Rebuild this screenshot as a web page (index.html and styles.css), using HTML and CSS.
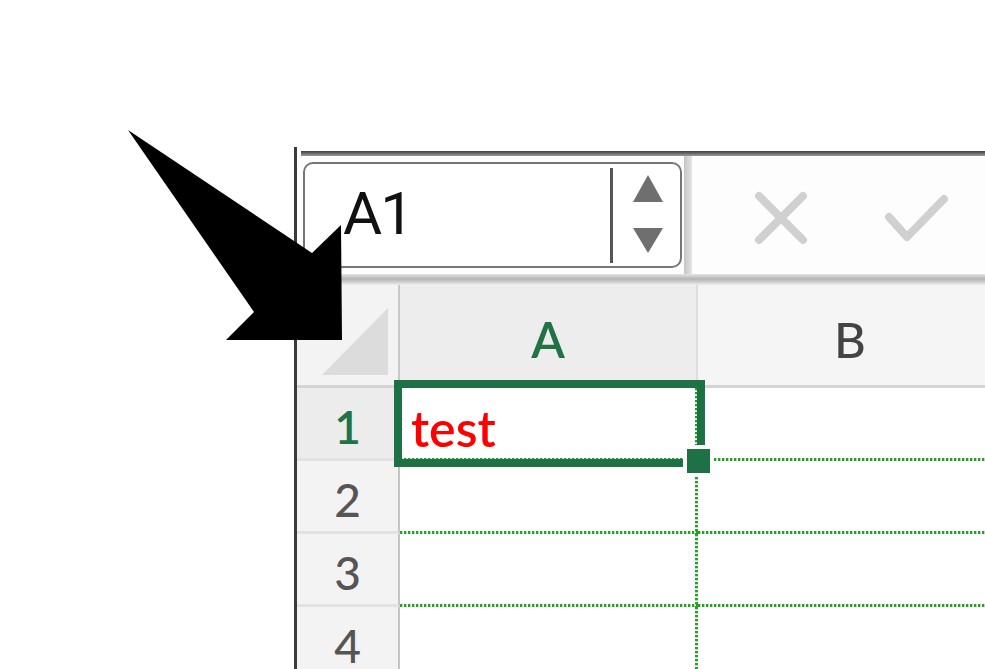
FILE: index.html
```html
<!DOCTYPE html>
<html>
<head>
<meta charset="utf-8">
<title>Excel name box</title>
<link rel="stylesheet" href="styles.css">
</head>
<body>
<div class="stage">
  <div class="window">
    <div class="fbar">
      <div class="topline"></div>
      <div class="fbar-body">
        <div class="namebox">
          <div class="nb-text">A1</div>
          <div class="nb-divider"></div>
          <div class="nb-spin">
            <svg width="67" height="102" viewBox="0 0 67 102">
              <polygon points="20,38 50,38 35,11" fill="#6f6f6f"/>
              <polygon points="20,64 50,64 35,89" fill="#6f6f6f"/>
            </svg>
          </div>
        </div>
        <div class="fbar-sep"></div>
        <svg class="ic-x" width="56" height="56" viewBox="0 0 56 56">
          <path d="M6 6 L50 50 M50 6 L6 50" stroke="#d0d0d0" stroke-width="8" stroke-linecap="round" fill="none"/>
        </svg>
        <svg class="ic-check" width="66" height="52" viewBox="0 0 66 52">
          <polyline points="5,25 23,45 60,7" stroke="#d0d0d0" stroke-width="8" stroke-linecap="round" stroke-linejoin="round" fill="none"/>
        </svg>
      </div>
      <div class="fbar-bottom"></div>
    </div>
    <div class="grid">
      <div class="corner">
        <svg width="101" height="100" viewBox="0 0 101 100">
          <polygon points="25,90 91,23 91,90" fill="#dcdcdc"/>
        </svg>
      </div>
      <div class="colhead sel">A</div>
      <div class="colhead">B</div>

      <div class="rowhead sel">1</div>
      <div class="cell a"><span class="val">test</span></div>
      <div class="cell b"></div>

      <div class="rowhead">2</div>
      <div class="cell a"></div>
      <div class="cell b"></div>

      <div class="rowhead">3</div>
      <div class="cell a"></div>
      <div class="cell b"></div>

      <div class="rowhead">4</div>
      <div class="cell a"></div>
      <div class="cell b"></div>

      <div class="sel-box"></div>
      <div class="handle"></div>
    </div>
  </div>
  <svg class="arrow" width="985" height="669" viewBox="0 0 985 669">
    <polygon points="128,130 312,253 341,225 342,340 226,340 254,312" fill="#000"/>
  </svg>
</div>
</body>
</html>
```

FILE: styles.css
```css
html, body {
  margin: 0;
  padding: 0;
  background: #ffffff;
}

.stage {
  position: relative;
  width: 985px;
  height: 669px;
  overflow: hidden;
  background: #ffffff;
}

.window {
  margin-top: 147px;
  margin-left: 294px;
  width: 720px;
  border-left: 3px solid #3a3a3a;
  background: #fdfdfd;
}

.fbar {
  padding-top: 4px;
  background: #ffffff;
}

.topline {
  margin-left: 4px;
  height: 5px;
  background: linear-gradient(#3e3e3e, #9a9a9a);
}

.fbar-body {
  display: flex;
  align-items: flex-start;
  height: 118px;
  padding-left: 6px;
  background: #fdfdfd;
}

.namebox {
  margin-top: 6px;
  width: 379px;
  height: 106px;
  box-sizing: border-box;
  border: 2px solid #767676;
  border-radius: 10px;
  background: #ffffff;
  display: flex;
}

.nb-text {
  width: 305px;
  box-sizing: border-box;
  padding-left: 38px;
  padding-bottom: 4px;
  display: flex;
  align-items: center;
  font-family: Roboto, "Noto Sans", sans-serif;
  font-size: 60px;
  color: #111;
  letter-spacing: -2px;
}

.nb-divider {
  width: 3px;
  margin: 4px 0 3px 0;
  background: #555;
}

.nb-spin {
  width: 67px;
}

.nb-spin svg {
  display: block;
}

.fbar-sep {
  margin-left: 2px;
  width: 8px;
  height: 118px;
  background: linear-gradient(to right, #c4c4c4, #e6e6e6);
}

.ic-x {
  display: block;
  margin-left: 61px;
  margin-top: 34px;
}

.ic-check {
  display: block;
  margin-left: 75px;
  margin-top: 36px;
}

.fbar-bottom {
  height: 11px;
  background: linear-gradient(#e4e4e4, #b4b4b4 45%, #d6d6d6 80%, #efefef);
}

.grid {
  position: relative;
  display: grid;
  grid-template-columns: 103px 298px 304px;
  grid-template-rows: 103px 73px 73px 73px 73px;
  font-family: Lato, "Open Sans", sans-serif;
  font-weight: 500;
}

.corner {
  background: #f3f3f3;
  border-right: 2px solid #c8c8c8;
  border-bottom: 3px solid #d4d4d4;
}

.corner svg {
  display: block;
}

.colhead {
  display: flex;
  align-items: center;
  justify-content: center;
  padding-top: 7px;
  box-sizing: border-box;
  font-size: 49px;
  color: #444;
  background: #f5f5f5;
  border-bottom: 3px solid #d4d4d4;
}

.colhead.sel {
  color: #217346;
  font-weight: 600;
  background: #ededed;
  border-right: 2px solid #dedede;
}

.rowhead {
  display: flex;
  align-items: center;
  justify-content: center;
  padding-top: 7px;
  box-sizing: border-box;
  font-size: 46px;
  color: #555;
  background: #f3f3f3;
  border-right: 2px solid #c4c4c4;
  border-bottom: 3px solid #e2e2e2;
}

.rowhead.sel {
  color: #217346;
  font-weight: 600;
  background: #ececec;
}

.cell {
  box-sizing: border-box;
  background-color: #ffffff;
  background-image: repeating-linear-gradient(90deg, #22a322 0 2px, rgba(34, 163, 34, 0.35) 2px 3px, transparent 3px 4px);
  background-size: 100% 3px;
  background-position: left bottom;
  background-repeat: no-repeat;
}

.cell.a {
  background-image:
    repeating-linear-gradient(90deg, #22a322 0 2px, rgba(34, 163, 34, 0.35) 2px 3px, transparent 3px 4px),
    repeating-linear-gradient(180deg, #22a322 0 2px, rgba(34, 163, 34, 0.35) 2px 3px, transparent 3px 4px);
  background-size: 100% 3px, 3px 100%;
  background-position: left bottom, right top;
  background-repeat: no-repeat, no-repeat;
  display: flex;
  align-items: center;
  padding-left: 11px;
  padding-top: 6px;
}

.val {
  font-size: 50px;
  font-weight: 600;
  color: #ff0000;
}

.sel-box {
  position: absolute;
  left: 97px;
  top: 95px;
  width: 311px;
  height: 87px;
  box-sizing: border-box;
  border: 8px solid #1e7145;
}

.handle {
  position: absolute;
  left: 386px;
  top: 160px;
  width: 31px;
  height: 32px;
  box-sizing: border-box;
  border: 4px solid #ffffff;
  background: #1e7145;
}

.arrow {
  position: absolute;
  left: 0;
  top: 0;
  pointer-events: none;
}
```
